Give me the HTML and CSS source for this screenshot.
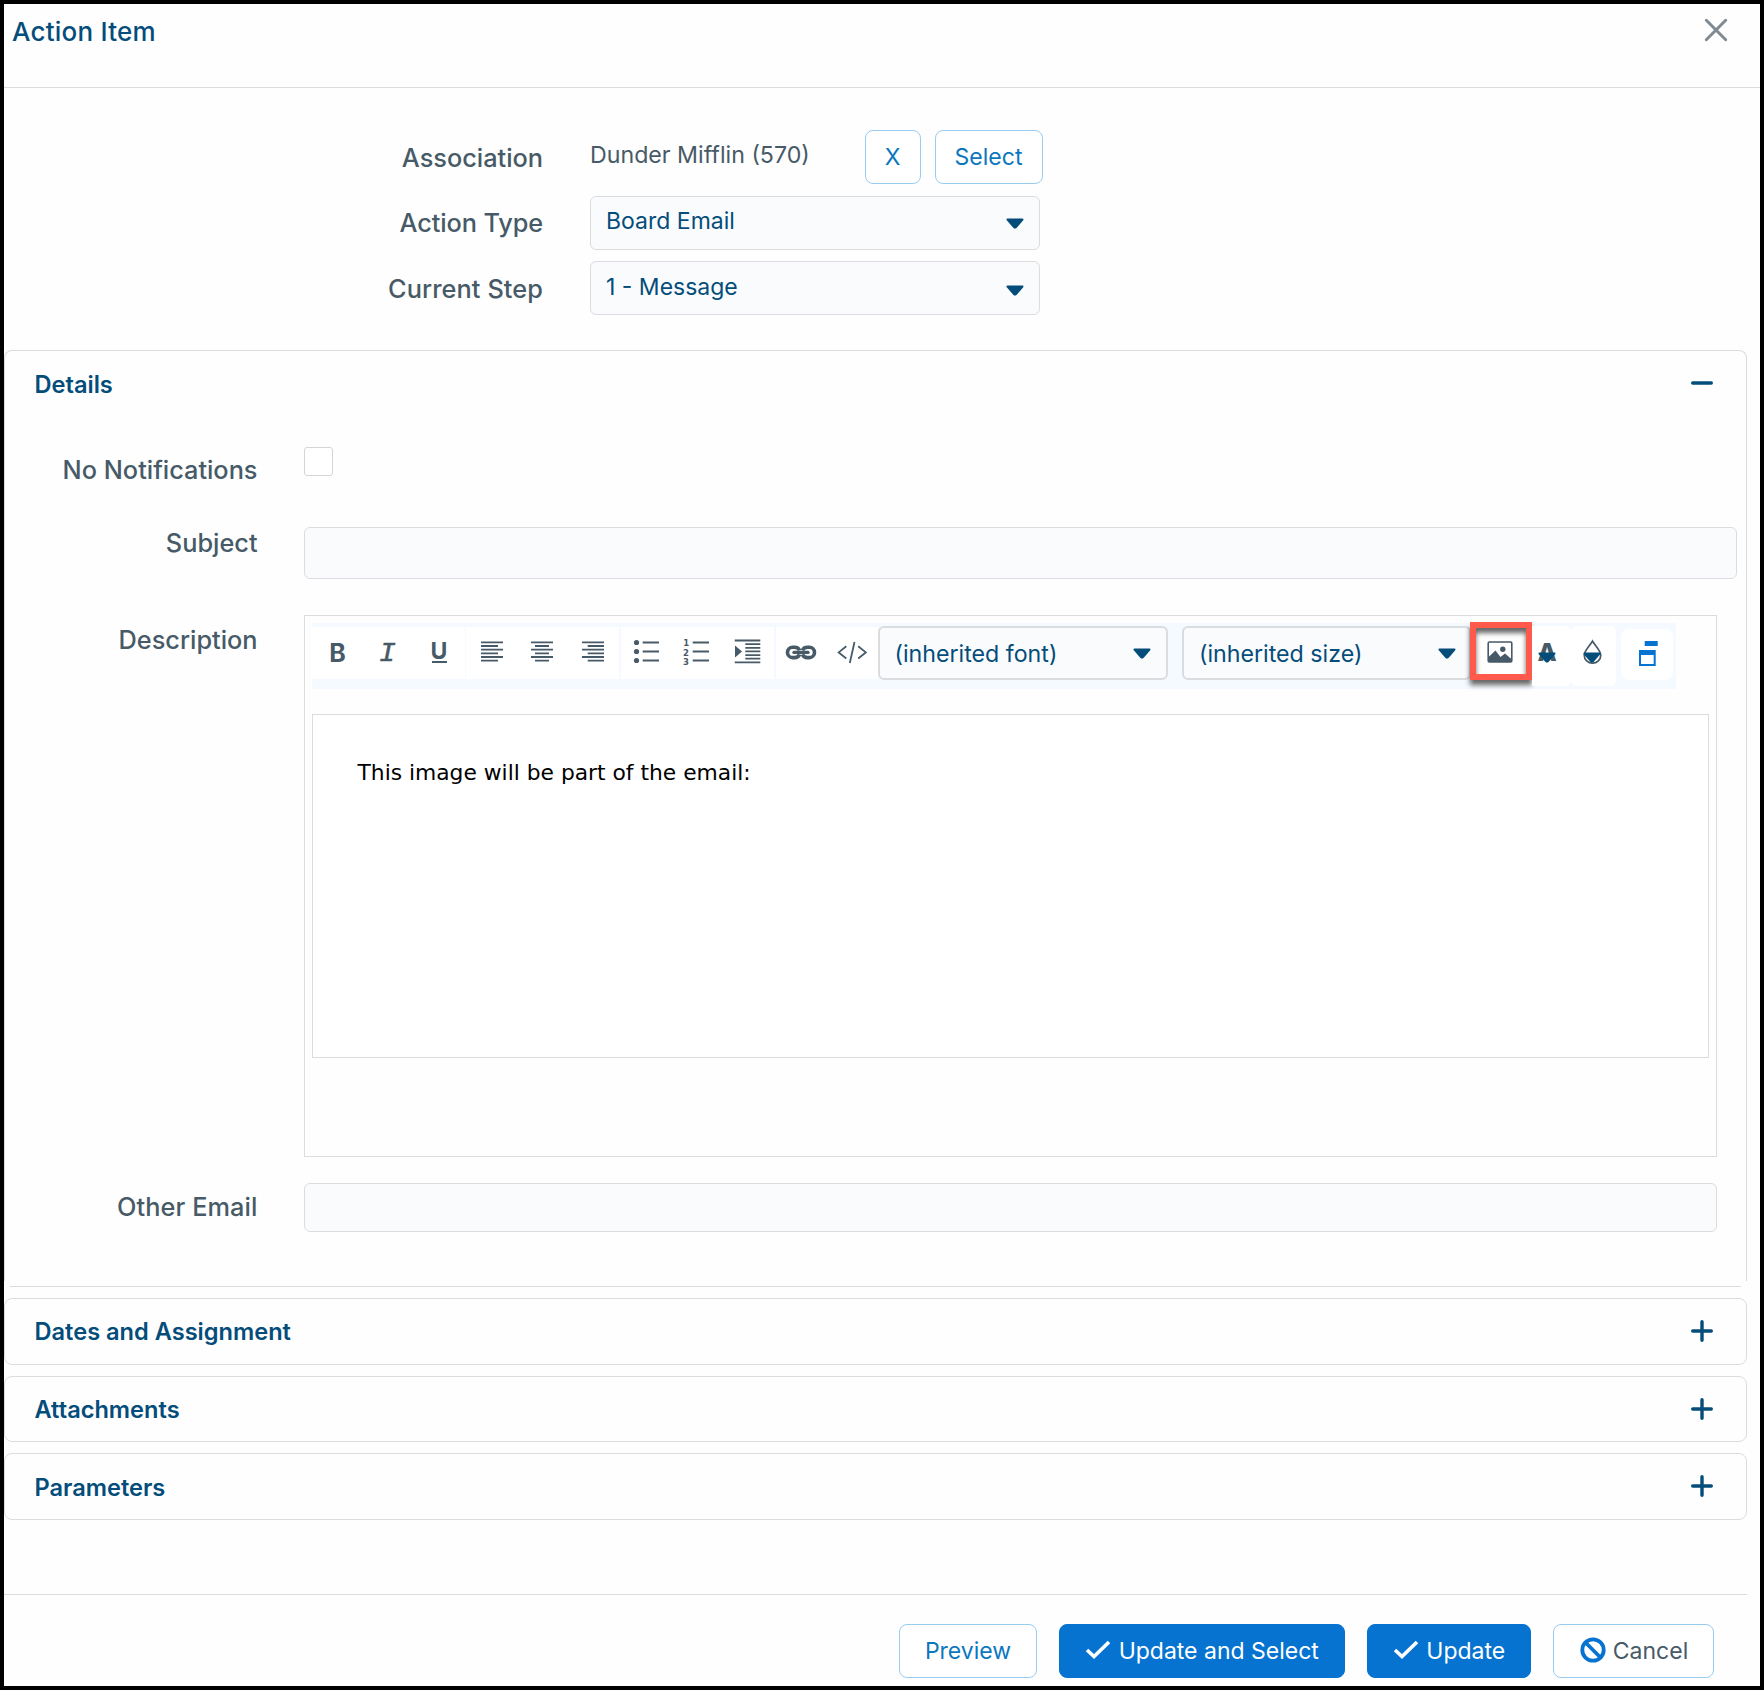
FILE: index.html
```html
<!DOCTYPE html>
<html lang="en">
<head>
<meta charset="utf-8">
<title>Action Item</title>
<link rel="stylesheet" href="styles.css">
</head>
<body>
<div class="dialog">
  <header class="dialog-header">
    <h1 class="dialog-title">Action Item</h1>
    <svg class="close" viewBox="0 0 24 24"><path d="M2.3 2.3 21.7 21.7M21.7 2.3 2.3 21.7"/></svg>
  </header>

  <section class="summary">
    <div class="summary-row">
      <label class="label">Association</label>
      <div class="association">
        <span class="value">Dunder Mifflin (570)</span>
        <button class="btn btn-x">X</button>
        <button class="btn btn-select">Select</button>
      </div>
    </div>
    <div class="summary-row">
      <label class="label label-type">Action Type</label>
      <div class="select"><span>Board Email</span><svg class="caret" viewBox="0 0 18 11"><path d="M1.5 1.5H16.5L10 9Q9 10 8 9Z"/></svg></div>
    </div>
    <div class="summary-row">
      <label class="label label-step">Current Step</label>
      <div class="select select-step"><span>1 - Message</span><svg class="caret" viewBox="0 0 18 11"><path d="M1.5 1.5H16.5L10 9Q9 10 8 9Z"/></svg></div>
    </div>
  </section>

  <section class="details">
    <div class="details-head">
      <h2 class="panel-title">Details</h2>
      <svg class="toggle" viewBox="0 0 22 22"><path d="M1.7 11H20.3"/></svg>
    </div>
    <div class="field field-check">
      <label class="label">No Notifications</label>
      <span class="checkbox"></span>
    </div>
    <div class="field field-subject">
      <label class="label">Subject</label>
      <div class="input input-subject"></div>
    </div>
    <div class="field field-description">
      <label class="label">Description</label>
      <div class="editor">
        <div class="toolbar">
          <div class="group group-text">
            <span class="tool tool-bold">B</span>
            <span class="tool tool-italic">I</span>
            <span class="tool tool-underline"><span class="underlined">U</span></span>
          </div>
          <div class="group group-align">
            <svg class="tool" viewBox="0 0 51 52"><path class="thin" d="M15 15.3H37M15 19H32M15 22.7H37M15 26.3H32M15 30H37M15 33.7H32"/></svg>
            <svg class="tool" viewBox="0 0 51 52"><path class="thin" d="M14 15.3H36M18 19H32M14 22.7H36M18 26.3H32M14 30H36M18 33.7H32"/></svg>
            <svg class="tool" viewBox="0 0 51 52"><path class="thin" d="M14 15.3H36M19.7 19H36M14 22.7H36M19.7 26.3H36M14 30H36M19.7 33.7H36"/></svg>
          </div>
          <div class="group group-list">
            <svg class="tool" viewBox="0 0 51 52"><path class="thin" d="M21.7 15.5H38M21.7 24.5H38M21.7 33.5H38"/><circle cx="15.5" cy="15.5" r="2.6"/><circle cx="15.5" cy="24.5" r="2.6"/><circle cx="15.5" cy="33.5" r="2.6"/></svg>
            <svg class="tool" viewBox="0 0 51 52"><path class="thin" d="M20.7 15.5H37M20.7 24.5H37M20.7 33.5H37"/><text x="11.3" y="19.3">1</text><text x="11" y="28.5">2</text><text x="11" y="37.7">3</text></svg>
            <svg class="tool" viewBox="0 0 51 52"><path class="thin" d="M11.7 13.5H37.3M22.3 17.2H37.3M22.3 20.8H37.3M22.3 24.4H37.3M22.3 28.1H37.3M22.3 31.7H37.3M11.7 35.4H37.3"/><path d="M12 18.5V30.5L19 24.5Z"/></svg>
          </div>
          <div class="group group-insert">
            <svg class="tool" viewBox="2 0 51 52"><path class="link" d="M25.5 23.4C24.8 21.2 23 20.2 20.5 20.2H18.7A5.2 5.2 0 0 0 18.7 30.6H20.5C23 30.6 24.8 29.6 25.5 27.4M28.5 23.4C29.2 21.2 31 20.2 33.5 20.2H35.3A5.2 5.2 0 0 1 35.3 30.6H33.5C31 30.6 29.2 29.6 28.5 27.4"/><path class="bar" d="M20 25.4H34"/></svg>
            <svg class="tool" viewBox="1 0 51 52"><path class="thin" d="M20.3 19.3 12.7 25.4 20.3 31.5M32.2 19.3 39.8 25.4 32.2 31.5M28.5 15 23.8 36"/></svg>
          </div>
          <div class="select select-tool select-font"><span>(inherited font)</span><svg class="caret" viewBox="0 0 18 11"><path d="M1.5 1.5H16.5L10 9Q9 10 8 9Z"/></svg></div>
          <div class="select select-tool select-size"><span>(inherited size)</span><svg class="caret" viewBox="0 0 18 11"><path d="M1.5 1.5H16.5L10 9Q9 10 8 9Z"/></svg></div>
          <div class="tool-image">
            <svg viewBox="0 0 26 22"><rect class="frame" x="1.2" y="1" width="23.6" height="20" rx="1.2"/><path d="M1 16.5 8.5 9.5 13.5 16 18 12.5 25 18.5V21H1Z"/><circle cx="15.8" cy="8.2" r="2.7"/></svg>
            <div class="highlight"></div>
          </div>
          <div class="tool-color tool-forecolor"><span>A</span><svg class="caret" viewBox="0 0 18 11"><path d="M1.5 1.5H16.5L10 9Q9 10 8 9Z"/></svg></div>
          <div class="tool-color tool-backcolor"><svg class="drop" viewBox="0 0 20 26"><path d="M10 1.5C7.5 6 1.3 11.5 1.3 16.3A8.7 8.4 0 0 0 18.7 16.3C18.7 11.5 12.5 6 10 1.5Z"/></svg><svg class="caret" viewBox="0 0 18 11"><path d="M1.5 1.5H16.5L10 9Q9 10 8 9Z"/></svg></div>
          <div class="tool-window"><svg viewBox="0 0 19 25"><path d="M5.7 0H18.7V5H5.7ZM0 9H16.7V25H0ZM2 14V23H14.7V14Z" fill-rule="evenodd"/></svg></div>
        </div>
        <div class="content">This image will be part of the email:</div>
      </div>
    </div>
    <div class="field field-email">
      <label class="label">Other Email</label>
      <div class="input input-email"></div>
    </div>
  </section>
  <div class="details-end"></div>

  <div class="panels">
    <section class="panel"><h2 class="panel-title">Dates and Assignment</h2><svg class="toggle" viewBox="0 0 22 22"><path d="M1.7 11H20.3M11 1.7V20.3"/></svg></section>
    <section class="panel"><h2 class="panel-title">Attachments</h2><svg class="toggle" viewBox="0 0 22 22"><path d="M1.7 11H20.3M11 1.7V20.3"/></svg></section>
    <section class="panel panel-parameters"><h2 class="panel-title">Parameters</h2><svg class="toggle" viewBox="0 0 22 22"><path d="M1.7 11H20.3M11 1.7V20.3"/></svg></section>
  </div>

  <footer class="footer">
    <button class="btn btn-preview">Preview</button>
    <button class="btn btn-primary btn-update-select"><svg class="check" viewBox="0 0 26 19"><path d="M2 10 9 16.5 24 2"/></svg>Update and Select</button>
    <button class="btn btn-primary btn-update"><svg class="check" viewBox="0 0 26 19"><path d="M2 10 9 16.5 24 2"/></svg>Update</button>
    <button class="btn btn-cancel"><svg class="ban" viewBox="0 0 26 26"><circle cx="13" cy="13" r="10.7"/><path d="M5.5 5.5 20.5 20.5"/></svg>Cancel</button>
  </footer>
</div>
</body>
</html>
```
FILE: styles.css
```css
* { box-sizing: border-box; }
body { margin: 0; background: #fff; font-family: Inter, "Liberation Sans", sans-serif; }
svg { display: block; flex: none; }
h1, h2 { margin: 0; font-weight: inherit; }

.dialog { width: 1764px; height: 1690px; border: 4px solid #000; background: #fefefe; }
.dialog-header { height: 84px; border-bottom: 1px solid #dadce0; display: flex; justify-content: space-between; padding: 11px 32.5px 0 8px; }
.dialog-title { font-size: 26px; font-weight: 500; line-height: 34px; letter-spacing: .22px; color: #044d7a; }
.close { width: 24px; height: 24px; margin-top: 3px; fill: none; stroke: #7f8a92; stroke-width: 3; stroke-linecap: round; }

.label { font-size: 25.3px; font-weight: 500; line-height: 32px; color: #475a67; text-align: right; white-space: nowrap; }

.summary { padding-top: 42px; height: 262px; display: flex; flex-direction: column; gap: 11px; }
.summary-row { display: grid; grid-template-columns: 539px 1fr; column-gap: 47px; height: 54.5px; }
.summary-row .label { padding-top: 12px; }
.summary-row .label-type { padding-top: 11px; letter-spacing: -.1px; }
.summary-row .label-step { letter-spacing: .1px; }
.association { display: flex; }
.value { width: 274.5px; padding-top: 10px; font-size: 23.2px; line-height: 30px; color: #475a67; white-space: nowrap; }

.btn { display: flex; height: 54px; border: 1px solid #99cdf0; border-radius: 8px; background: #fff; color: #0c77be; font: 23px/52px Inter, "Liberation Sans", sans-serif; padding: 0; justify-content: center; align-items: flex-start; white-space: nowrap; }
.btn-x { width: 56px; margin-right: 14px; }
.btn-select { width: 108px; }

.select { width: 450px; height: 54px; border: 1px solid #dadce0; border-radius: 6px; background: #fafbfd; display: flex; justify-content: space-between; padding: 0 15px 0 15px; font-size: 23px; line-height: 49px; color: #044d7a; white-space: nowrap; }
.caret { width: 18px; height: 11px; fill: #044d7a; stroke: #044d7a; stroke-width: 2; stroke-linejoin: round; }
.select .caret { margin-top: 21.5px; }
.select-step { padding-top: 1px; }

.details { width: 1743px; height: 931px; border: 1px solid #dadce0; border-bottom: 0; border-radius: 8px 8px 0 0; }
.details-head { display: flex; justify-content: space-between; padding: 18px 33px 0 29.5px; height: 96px; }
.panel-title { font-size: 23.6px; font-weight: 600; line-height: 32px; color: #044d7a; white-space: nowrap; }
.toggle { width: 22px; height: 22px; margin-top: 3px; fill: none; stroke: #044d7a; stroke-width: 3.4; stroke-linecap: round; }

.field { display: grid; grid-template-columns: 252.5px 1fr; column-gap: 46.5px; }
.field-check { height: 80px; }
.field-check .label { padding-top: 7px; }
.checkbox { width: 29px; height: 29px; border: 1px solid #d3d5d9; border-radius: 3px; background: #fff; }
.input { border: 1px solid #dadce0; border-radius: 6px; background: #fafbfd; }
.input-subject { width: 1433px; height: 52px; }
.field-subject { height: 88px; }
.field-description { height: 568px; }
.field-description .label { padding-top: 9px; }
.field-email .label { padding-top: 8px; letter-spacing: .1px; }
.input-email { width: 1413px; height: 49px; }

.editor { width: 1413px; height: 542px; border: 1px solid #dadce0; padding: 7px; }
.toolbar { width: 1364px; height: 66px; background: #f4faff; display: flex; padding-top: 4px; }
.group { display: flex; height: 52px; background: #fff; margin-right: 1px; }
.group-align, .group-list { margin-right: 2px; }
.group-insert { margin-right: 0; }
.tool { width: 51px; height: 52px; fill: #475a67; color: #475a67; }
.thin { fill: none; stroke: #475a67; stroke-width: 1.8; }
.tool text { font: 700 8.5px "DejaVu Sans", sans-serif; }
.tool-bold { font-size: 25px; font-weight: 700; line-height: 52px; text-align: center; }
.tool-italic { padding-right: 2px; font: italic 400 28px/54px "Liberation Mono", monospace; -webkit-text-stroke: .5px #475a67; text-align: center; }
.tool-underline { display: flex; justify-content: center; padding: 12px 1px 0 0; }
.underlined { font-size: 23px; font-weight: 700; line-height: 24px; height: 24px; width: 15px; display: flex; justify-content: center; border-bottom: 2px solid #475a67; }
.link { fill: none; stroke: #475a67; stroke-width: 3.6; }
.bar { fill: none; stroke: #475a67; stroke-width: 3.4; stroke-linecap: round; }

.select-tool { margin-top: -1px; border-width: 2px; font-size: 23.2px; line-height: 52px; }
.select-font { width: 290px; padding: 0 15px 0 14.5px; margin-right: 14px; }
.select-size { width: 289px; padding: 0 13.5px 0 15px; }
.select-tool .caret { margin-top: 20px; }

.tool-image { position: relative; width: 61px; height: 58px; background: #fff; padding: 14px 0 0 16px; }
.tool-image svg { width: 26px; height: 22px; fill: #475a67; }
.tool-image .frame { fill: none; stroke: #475a67; stroke-width: 1.6; }
.highlight { position: absolute; left: -1px; top: -5px; width: 62px; height: 58px; border: 6px solid #ff5a4b; box-shadow: 0 5px 5px rgba(0,0,0,.6), inset 0 5px 5px rgba(0,0,0,.6); }

.tool-color { position: relative; height: 60px; margin-top: -1px; background: #fff; border-radius: 0 6px 6px 0; }
.tool-color .caret { position: absolute; top: 26px; }
.tool-forecolor { width: 39px; padding-left: 5.5px; font-size: 25px; font-weight: 800; line-height: 53px; color: #475a67; }
.tool-forecolor .caret { left: 6px; }
.tool-backcolor { width: 45px; padding: 13px 0 0 12px; border-radius: 6px; }
.tool-backcolor .caret { left: 12px; }
.drop { width: 19px; height: 26px; fill: none; stroke: #475a67; stroke-width: 1.8; }
.tool-window { width: 52px; height: 51px; margin: 2px 0 0 5px; border-radius: 8px; background: #fff; padding: 12px 0 0 18px; }
.tool-window svg { width: 19px; height: 25px; fill: #0673d1; }

.content { width: 1397px; height: 344px; margin-top: 25px; border: 1px solid #dadce0; background: #fff; padding: 44px 44.5px; font: 21.8px/28px "DejaVu Sans", sans-serif; color: #000; }

.details-end { width: 1731px; margin: 5px 0 0 6px; border-top: 1px solid #dadce0; }
.panels { display: flex; flex-direction: column; gap: 11px; margin-top: 11px; }
.panel { width: 1743px; height: 66.7px; border: 1px solid #dadce0; border-radius: 8px; display: flex; justify-content: space-between; padding: 17px 33px 0 29.5px; }
.panel .toggle { margin-top: 4px; }
.panel-parameters .panel-title { padding-top: 1px; }

.footer { width: 1743px; margin-top: 73.9px; border-top: 1px solid #dadce0; padding: 29px 33px 0 0; display: flex; justify-content: flex-end; gap: 22px; }
.btn-preview { width: 138px; }
.btn-primary { background: #0673d1; border-color: #0673d1; color: #fff; }
.btn-update-select { width: 286px; }
.btn-update { width: 164px; }
.btn-cancel { width: 161px; color: #475a67; padding-left: 1px; }
.check { width: 26px; height: 19px; margin: 15px 7.5px 0 0; fill: none; stroke: #fff; stroke-width: 3.6; }
.ban { width: 26px; height: 26px; margin: 12px 7px 0 0; fill: none; stroke: #0673d1; stroke-width: 3.8; }
```
